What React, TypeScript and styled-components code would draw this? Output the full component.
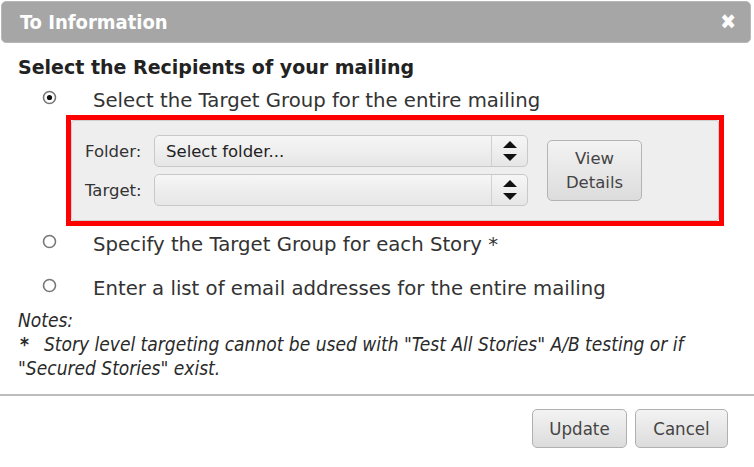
import React from 'react';
import styled, { createGlobalStyle } from 'styled-components';

const GlobalStyle = createGlobalStyle`
  html, body {
    margin: 0;
    padding: 0;
    background: #ffffff;
  }
  body {
    font-family: "DejaVu Sans", Verdana, sans-serif;
    color: #333333;
  }
`;

const Dialog = styled.div`
  width: 754px;
  height: 467px;
  box-sizing: border-box;
  display: flex;
  flex-direction: column;
  background: #fff;
  overflow: hidden;
`;

const TitleBar = styled.div`
  margin: 1px 3px 0 1px;
  height: 42px;
  box-sizing: border-box;
  background: #a6a6a6;
  border: 1px solid #b8b8b8;
  border-radius: 5px;
  display: flex;
  align-items: center;
  justify-content: space-between;
  padding: 0 14px 0 18px;
  color: #ffffff;
  font-family: "DejaVu Sans Condensed", "DejaVu Sans", sans-serif;
  font-weight: bold;
  font-size: 20px;
`;

const CloseX = styled.span`
  font-size: 21px;
  line-height: 1;
`;

const Body = styled.div`
  padding: 0 18px;
  display: flex;
  flex-direction: column;
`;

const Heading = styled.div`
  margin-top: 13px;
  height: 22px;
  font-weight: bold;
  font-size: 19px;
  line-height: 22px;
  color: #222;
  white-space: nowrap;
`;

const OptionRow = styled.label<{ $h: number; $pad: number }>`
  display: flex;
  align-items: flex-start;
  box-sizing: border-box;
  height: ${(p) => p.$h}px;
  padding-top: ${(p) => p.$pad}px;
  font-size: 19.7px;
  line-height: 24px;
  color: #333;
  white-space: nowrap;
`;

const RadioWrap = styled.span`
  width: 75px;
  padding-left: 24px;
  box-sizing: border-box;
  display: flex;
  align-items: center;
  height: 15px;
  margin-top: 1px;
`;

const RedBox = styled.div`
  margin-left: 48px;
  width: 658px;
  height: 111px;
  box-sizing: border-box;
  border: 5px solid #ff0000;
  display: flex;
`;

const Panel = styled.div`
  flex: 1;
  background: #eeeeee;
  border: 1px solid #cfcfcf;
  border-radius: 3px;
  display: flex;
  align-items: center;
  padding: 0 0 0 13px;
`;

const Fields = styled.div`
  display: flex;
  flex-direction: column;
  gap: 7px;
`;

const FieldRow = styled.div`
  display: flex;
  align-items: center;
`;

const FieldLabel = styled.span`
  width: 69px;
  font-size: 16.5px;
  color: #333;
`;

const SelectBox = styled.div`
  width: 374px;
  height: 32px;
  box-sizing: border-box;
  border: 1px solid #c8c8c8;
  border-radius: 5px;
  background: linear-gradient(#f6f6f6, #e6e6e6);
  display: flex;
  align-items: stretch;
  font-size: 16.5px;
  color: #222;
`;

const SelectText = styled.span`
  flex: 1;
  display: flex;
  align-items: center;
  padding-left: 11px;
`;

const ArrowCell = styled.span`
  width: 35px;
  border-left: 1px solid #d0d0d0;
  display: flex;
  align-items: center;
  justify-content: center;
`;

const ViewButton = styled.button`
  margin-left: 19px;
  width: 95px;
  height: 61px;
  border: 1px solid #b4b4b4;
  border-radius: 5px;
  background: linear-gradient(#f3f3f3, #dcdcdc);
  font-family: "DejaVu Sans", sans-serif;
  font-size: 16.5px;
  line-height: 24px;
  color: #444;
  padding: 0;
`;

const Notes = styled.div`
  font-family: "DejaVu Sans Condensed", "DejaVu Sans", sans-serif;
  font-style: italic;
  font-size: 19px;
  line-height: 24px;
  color: #2a2a2a;
`;

const NoteText = styled.div`
  padding-right: 0;
`;

const Star = styled.span`
  display: inline-block;
  font-style: normal;
  font-weight: bold;
  line-height: 1;
  margin-left: 2px;
  margin-right: 15px;
`;

const Divider = styled.hr`
  margin: 14px 0 0 0;
  border: 0;
  border-top: 2px solid #bdbdbd;
  width: 754px;
`;

const Footer = styled.div`
  display: flex;
  justify-content: flex-end;
  gap: 8px;
  padding: 13px 26px 0 0;
`;

const FooterButton = styled.button<{ $w: number }>`
  width: ${(p) => p.$w}px;
  height: 39px;
  border: 1px solid #b0b0b0;
  border-radius: 5px;
  background: linear-gradient(#f3f3f3, #dcdcdc);
  font-family: "DejaVu Sans Condensed", "DejaVu Sans", sans-serif;
  font-size: 18.5px;
  color: #444;
  padding: 0;
`;

const Radio = ({ checked }: { checked?: boolean }) => (
  <svg width="15" height="15" viewBox="0 0 15 15">
    <circle cx="7.5" cy="7.5" r="6" fill="#fff" stroke="#777" strokeWidth="1.6" />
    {checked && <circle cx="7.5" cy="7.5" r="2.6" fill="#111" />}
  </svg>
);

const Arrows = () => (
  <svg width="16" height="24" viewBox="0 0 16 24">
    <polygon points="8,2 15,9 1,9" fill="#111" />
    <polygon points="1,15 15,15 8,22" fill="#111" />
  </svg>
);

const Select = ({ value }: { value?: string }) => (
  <SelectBox>
    <SelectText>{value}</SelectText>
    <ArrowCell>
      <Arrows />
    </ArrowCell>
  </SelectBox>
);

export default function App() {
  return (
    <>
      <GlobalStyle />
      <Dialog>
        <TitleBar>
          <span>To Information</span>
          <CloseX>✖</CloseX>
        </TitleBar>
        <Body>
          <Heading>Select the Recipients of your mailing</Heading>
          <OptionRow $h={37} $pad={11}>
            <RadioWrap>
              <Radio checked />
            </RadioWrap>
            <span>Select the Target Group for the entire mailing</span>
          </OptionRow>
          <RedBox>
            <Panel>
              <Fields>
                <FieldRow>
                  <FieldLabel>Folder:</FieldLabel>
                  <Select value="Select folder..." />
                </FieldRow>
                <FieldRow>
                  <FieldLabel>Target:</FieldLabel>
                  <Select />
                </FieldRow>
              </Fields>
              <ViewButton>
                View
                <br />
                Details
              </ViewButton>
            </Panel>
          </RedBox>
          <OptionRow $h={44} $pad={7}>
            <RadioWrap>
              <Radio />
            </RadioWrap>
            <span>Specify the Target Group for each Story *</span>
          </OptionRow>
          <OptionRow $h={38} $pad={7}>
            <RadioWrap>
              <Radio />
            </RadioWrap>
            <span>Enter a list of email addresses for the entire mailing</span>
          </OptionRow>
          <Notes>
            <div>Notes:</div>
            <NoteText>
              <Star>*</Star>
              Story level targeting cannot be used with "Test All Stories" A/B testing or if "Secured Stories" exist.
            </NoteText>
          </Notes>
        </Body>
        <Divider />
        <Footer>
          <FooterButton $w={95}>Update</FooterButton>
          <FooterButton $w={93}>Cancel</FooterButton>
        </Footer>
      </Dialog>
    </>
  );
}
